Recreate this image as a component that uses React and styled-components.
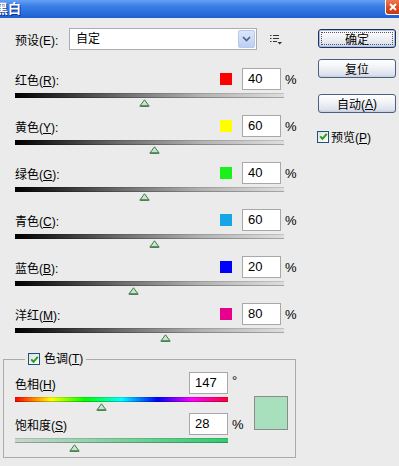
import React from "react";
import styled, { createGlobalStyle } from "styled-components";

const GlobalStyle = createGlobalStyle`
  html, body { margin: 0; padding: 0; }
  body {
    background: #ebebeb;
    font-family: "Liberation Sans", "Noto Sans CJK SC", sans-serif;
    font-size: 12px;
    color: #000;
    overflow: hidden;
  }
`;

const channels = [
  { name: "红色", key: "R", color: "#ff0000", value: 40 },
  { name: "黄色", key: "Y", color: "#ffff00", value: 60 },
  { name: "绿色", key: "G", color: "#1cf01c", value: 40 },
  { name: "青色", key: "C", color: "#14a6e6", value: 60 },
  { name: "蓝色", key: "B", color: "#0000ff", value: 20 },
  { name: "洋红", key: "M", color: "#e6008c", value: 80 },
];

function Thumb({ left }) {
  return (
    <ThumbMark style={{ left: left - 5.5 }} width="11" height="8" viewBox="0 0 11 8">
      <path d="M5.5 0.8 L10.2 7.2 H0.8 Z" fill="#c6e6c8" stroke="#3f7a4c" strokeWidth="1" />
      <path d="M1.5 7 H9.5" stroke="#2d5e38" strokeWidth="1" />
    </ThumbMark>
  );
}

function Check() {
  return (
    <CheckBox>
      <svg width="9" height="9" viewBox="0 0 9 9">
        <path d="M1.2 4.4 L3.5 6.8 L7.8 1.8" fill="none" stroke="#21a121" strokeWidth="2" />
      </svg>
    </CheckBox>
  );
}

function ChannelSlider({ ch }) {
  const pos = ((ch.value + 200) / 500) * 269;
  return (
    <ChannelRow>
      <TopLine>
        <Label>
          {ch.name}(<u>{ch.key}</u>):
        </Label>
        <ColorChip color={ch.color} />
        <NumBox>{ch.value}</NumBox>
        <Unit>%</Unit>
      </TopLine>
      <Track $w={269}>
        <Bar $kind="gray" />
        <Thumb left={pos} />
      </Track>
    </ChannelRow>
  );
}

function ToneSlider({ label, k, value, unit, max, kind }) {
  const pos = (value / max) * 213;
  return (
    <ToneRow>
      <TopLine>
        <Label>
          {label}(<u>{k}</u>)
        </Label>
        <NumBox>{value}</NumBox>
        <ToneUnit $deg={unit === "°"}>{unit}</ToneUnit>
      </TopLine>
      <Track $w={213}>
        <Bar $kind={kind} />
        <Thumb left={pos} />
      </Track>
    </ToneRow>
  );
}

export default function App() {
  return (
    <Window>
      <GlobalStyle />
      <TitleBar>
        <Title>黑白</Title>
        <CloseBtn>
          <svg width="10" height="10" viewBox="0 0 10 10">
            <path d="M2 2 L8 8 M8 2 L2 8" stroke="#fff" strokeWidth="2" />
          </svg>
        </CloseBtn>
      </TitleBar>
      <Body>
        <LeftCol>
          <PresetRow>
            <PresetLabel>预设(E):</PresetLabel>
            <Select>
              <SelectText>自定</SelectText>
              <DropBtn>
                <svg width="9" height="6" viewBox="0 0 9 6">
                  <path d="M1 1 L4.5 4.5 L8 1" fill="none" stroke="#4d6185" strokeWidth="1.6" />
                </svg>
              </DropBtn>
            </Select>
            <MenuIcon width="12" height="11" viewBox="0 0 12 11">
              <path d="M0 1.5 H1.5 M3 1.5 H9 M0 4.5 H1.5 M3 4.5 H9 M0 7.5 H1.5 M3 7.5 H7" stroke="#333" strokeWidth="1" />
              <path d="M7.5 8 H12 L9.75 10.5 Z" fill="#333" />
            </MenuIcon>
          </PresetRow>
          <Channels>
            {channels.map((ch) => (
              <ChannelSlider key={ch.key} ch={ch} />
            ))}
          </Channels>
          <Group>
            <Legend>
              <Check />
              <span>
                色调(<u>T</u>)
              </span>
            </Legend>
            <GroupInner>
              <ToneCol>
                <ToneSlider label="色相" k="H" value={147} unit="°" max={360} kind="hue" />
                <ToneSlider label="饱和度" k="S" value={28} unit="%" max={100} kind="sat" />
              </ToneCol>
              <ToneSwatch />
            </GroupInner>
          </Group>
        </LeftCol>
        <RightCol>
          <Button $default>确定</Button>
          <Button $gap={11}>复位</Button>
          <Button $gap={16}>
            自动(<u>A</u>)
          </Button>
          <PreviewRow>
            <Check />
            <span>
              预览(<u>P</u>)
            </span>
          </PreviewRow>
        </RightCol>
      </Body>
    </Window>
  );
}

const Window = styled.div`
  width: 399px;
  height: 466px;
  background: #ebebeb;
  overflow: hidden;
`;

const TitleBar = styled.div`
  height: 18px;
  display: flex;
  justify-content: space-between;
  align-items: flex-start;
  background: linear-gradient(#64a2f2 0%, #3a7ee6 35%, #2a6cdc 75%, #1f5fcf 100%);
`;

const Title = styled.div`
  margin-left: -5px;
  color: #fff;
  font-weight: bold;
  font-size: 13px;
  line-height: 18px;
  text-shadow: 1px 1px 0 #10308a;
`;

const CloseBtn = styled.div`
  width: 14px;
  height: 15px;
  box-sizing: border-box;
  border-left: 1px solid #fff;
  border-bottom: 1px solid #fff;
  border-bottom-left-radius: 3px;
  background: linear-gradient(#ee7a55, #d9471f 60%, #c23a15);
  display: flex;
  align-items: center;
  justify-content: center;
`;

const Body = styled.div`
  display: flex;
  padding-top: 10px;
`;

const LeftCol = styled.div`
  width: 296px;
`;

const PresetRow = styled.div`
  display: flex;
  align-items: center;
  height: 22px;
  padding-left: 15px;
`;

const PresetLabel = styled.div`
  width: 54px;
`;

const Select = styled.div`
  width: 188px;
  height: 22px;
  box-sizing: border-box;
  border: 1px solid #a9adb3;
  background: #fff;
  display: flex;
  align-items: stretch;
`;

const SelectText = styled.div`
  flex: 1;
  padding-left: 6px;
  line-height: 20px;
`;

const DropBtn = styled.div`
  width: 15px;
  margin: 1px;
  border: 1px solid #b9cbe9;
  border-radius: 2px;
  background: linear-gradient(#dbe6fb, #bccff3);
  display: flex;
  align-items: center;
  justify-content: center;
`;

const MenuIcon = styled.svg`
  margin-left: 13px;
`;

const Channels = styled.div`
  margin-top: 18px;
`;

const ChannelRow = styled.div`
  height: 47px;
  padding-left: 15px;
`;

const TopLine = styled.div`
  display: flex;
  align-items: center;
  height: 22px;
`;

const Label = styled.div`
  flex: 1;
  white-space: nowrap;
`;

const ColorChip = styled.div`
  width: 12px;
  height: 12px;
  margin-right: 10px;
  background: ${(p) => p.color};
`;

const NumBox = styled.div`
  width: 39px;
  height: 22px;
  box-sizing: border-box;
  border: 1px solid #a8a8a8;
  background: #fff;
  font-size: 13px;
  line-height: 20px;
  padding-left: 5px;
`;

const Unit = styled.div`
  width: 15px;
  padding-left: 4px;
  box-sizing: border-box;
  font-size: 13px;
`;

const Track = styled.div`
  position: relative;
  width: ${(p) => p.$w}px;
  margin-top: 3px;
`;

const bars = {
  gray: "linear-gradient(to right, #000 0%, #6e6e6e 40%, #b4b4b4 70%, #dedede 100%)",
  hue: "linear-gradient(to right, #ff0000 0%, #ffff00 17%, #00ff00 33%, #00ffff 50%, #0000ff 67%, #ff00ff 83%, #ff0030 100%)",
  sat: "linear-gradient(to right, #c9d6cd 0%, #2fcb70 100%)",
};

const Bar = styled.div`
  height: 5px;
  background: ${(p) => bars[p.$kind]};
  box-shadow: inset 0 -1px 0 rgba(0, 0, 0, 0.25), inset 0 1px 0 rgba(0, 0, 0, 0.12);
`;

const ThumbMark = styled.svg`
  position: absolute;
  top: 6px;
  display: block;
`;

const Group = styled.fieldset`
  margin: 2px 0 0 3px;
  width: 293px;
  box-sizing: border-box;
  border: 1px solid #ababab;
  padding: 6px 0 3px 11px;
`;

const Legend = styled.legend`
  margin-left: 10px;
  padding: 0 3px;
  display: flex;
  align-items: center;
  gap: 4px;
  line-height: 14px;
`;

const CheckBox = styled.div`
  width: 12px;
  height: 12px;
  box-sizing: border-box;
  border: 1px solid #1c5180;
  background: linear-gradient(135deg, #e0e0da, #fff);
  display: flex;
  align-items: center;
  justify-content: center;
`;

const GroupInner = styled.div`
  display: flex;
  align-items: center;
`;

const ToneCol = styled.div`
  width: 231px;
`;

const ToneRow = styled.div`
  height: 41px;
  width: 231px;
`;

const ToneUnit = styled.div`
  width: 18px;
  padding-left: 4px;
  box-sizing: border-box;
  font-size: 13px;
  align-self: ${(p) => (p.$deg ? "flex-start" : "center")};
  margin-top: ${(p) => (p.$deg ? "1px" : "0")};
`;

const ToneSwatch = styled.div`
  width: 34px;
  height: 34px;
  box-sizing: border-box;
  margin-left: 8px;
  border: 1px solid #8c8c8c;
  background: #a8dfbc;
`;

const RightCol = styled.div`
  margin-left: 22px;
  width: 78px;
  padding-top: 1px;
  display: flex;
  flex-direction: column;
`;

const Button = styled.div`
  position: relative;
  height: 19px;
  margin-top: ${(p) => p.$gap || 0}px;
  box-sizing: border-box;
  border: 1px solid ${(p) => (p.$default ? "#1d3160" : "#4c5e82")};
  border-radius: 3px;
  background: linear-gradient(#ffffff 0%, #f1f2f6 45%, #dde2ec 85%, #c6cede 100%);
  display: flex;
  align-items: center;
  justify-content: center;
  ${(p) =>
    p.$default &&
    `
    box-shadow: inset 0 0 0 1px #a9bde6;
    &::after {
      content: "";
      position: absolute;
      inset: 2px;
      border: 1px dotted #555;
    }
  `}
`;

const PreviewRow = styled.div`
  margin-top: 15px;
  margin-left: -1px;
  display: flex;
  align-items: center;
  gap: 2px;
`;
